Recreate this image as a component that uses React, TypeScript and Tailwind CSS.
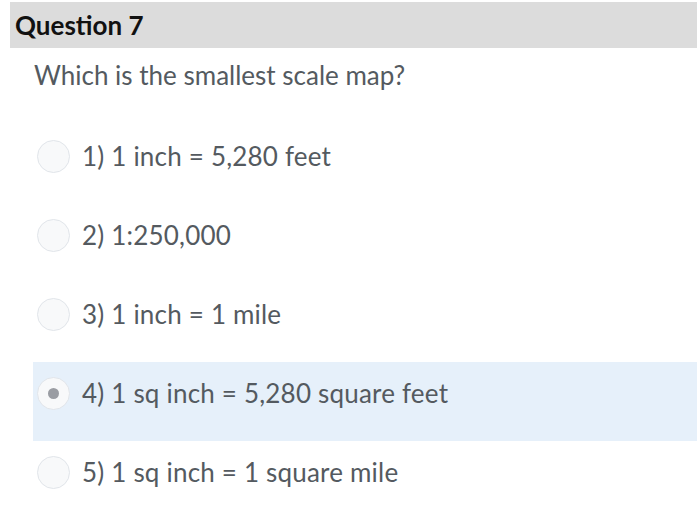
export default function App() {
  const options = [
    '1) 1 inch = 5,280 feet',
    '2) 1:250,000',
    '3) 1 inch = 1 mile',
    '4) 1 sq inch = 5,280 square feet',
    '5) 1 sq inch = 1 square mile',
  ]
  const selected = 3

  return (
    <div className="w-[697px] h-[521px] bg-white overflow-hidden" style={{ fontFamily: 'Lato, "Open Sans", sans-serif' }}>
      {/* Header */}
      <div className="ml-[10px] mt-[2px] h-[46px] bg-[#dcdcdc] flex items-center pl-[5px]">
        <h2 className="text-[26px] font-bold text-[#111] leading-[30px]">Question 7</h2>
      </div>

      {/* Question */}
      <div className="pl-[34px] pt-[12px] h-[77px] text-[26px] text-[#545a60] leading-[30px]">
        Which is the smallest scale map?
      </div>

      {/* Options */}
      <div className="ml-[33px]">
        {options.map((opt, i) => {
          const active = i === selected
          return (
            <div
              key={opt}
              className={`h-[79px] flex items-start pl-[4px] pt-[15px] gap-[12px] ${active ? 'bg-[#e6f0fa]' : ''}`}
            >
              <div className="w-[33px] h-[33px] rounded-full border border-[#e1e5ea] bg-[#f8f9fa] flex items-center justify-center shrink-0">
                {active && <div className="w-[11px] h-[11px] rounded-full bg-[#9a9da3]" />}
              </div>
              <span className="text-[26px] leading-[33px] text-[#545a60] tracking-[0.2px]">{opt}</span>
            </div>
          )
        })}
      </div>
    </div>
  )
}
